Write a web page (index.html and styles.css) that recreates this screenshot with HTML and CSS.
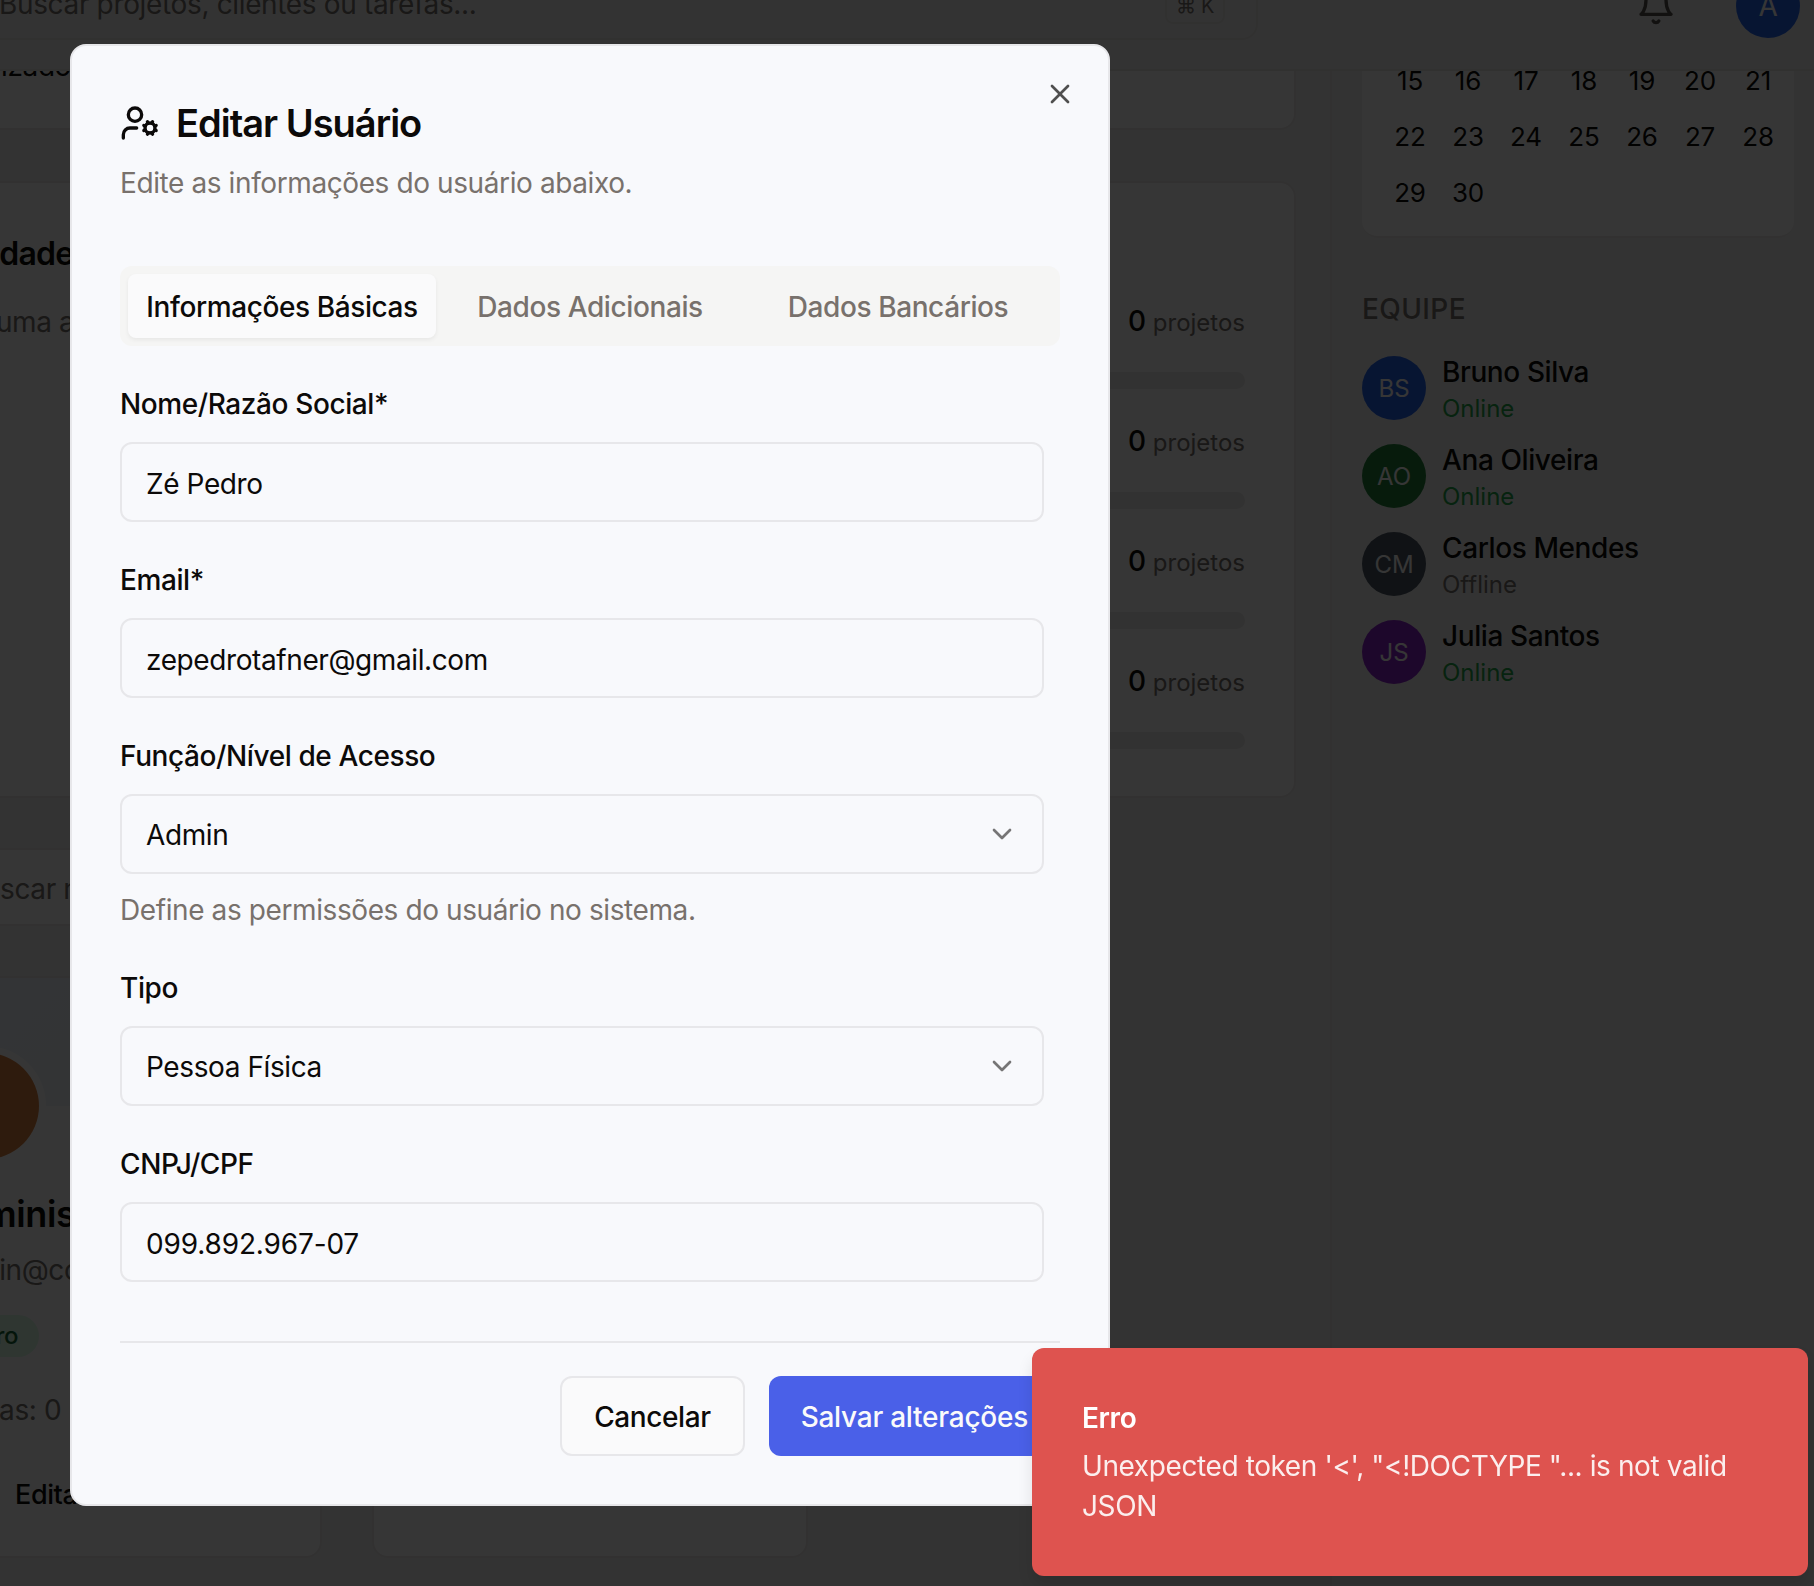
FILE: index.html
```html
<!DOCTYPE html>
<html lang="pt-BR">
<head>
<meta charset="utf-8">
<title>Editar Usuário</title>
<link rel="stylesheet" href="styles.css">
</head>
<body>
<div class="page">
  <header class="topbar">
    <div class="search">
      <span class="search-text">Buscar projetos, clientes ou tarefas...</span>
      <kbd class="kbd">⌘ K</kbd>
    </div>
    <div class="top-actions">
      <svg class="bell" viewBox="0 0 24 24" fill="none" stroke="currentColor" stroke-width="2" stroke-linecap="round" stroke-linejoin="round"><path d="M6 8a6 6 0 0 1 12 0c0 7 3 9 3 9H3s3-2 3-9"/><path d="M10.3 21a1.94 1.94 0 0 0 3.4 0"/></svg>
      <div class="top-avatar">A</div>
    </div>
  </header>
  <div class="workspace">
    <main class="main">
      <section class="card card-top"><p class="card-top-text">Realizado:</p></section>
      <section class="card card-activity">
        <div class="activity-head">
          <h2 class="activity-title">Atividades</h2>
          <p class="activity-sub">Nenhuma atividade</p>
        </div>
        <ul class="progress-list">
          <li class="progress-row"><p class="progress-label"><b>0</b> projetos</p><div class="bar"></div></li>
          <li class="progress-row"><p class="progress-label"><b>0</b> projetos</p><div class="bar"></div></li>
          <li class="progress-row"><p class="progress-label"><b>0</b> projetos</p><div class="bar"></div></li>
          <li class="progress-row"><p class="progress-label"><b>0</b> projetos</p><div class="bar"></div></li>
        </ul>
      </section>
      <div class="member-search">Buscar membros...</div>
      <div class="member-grid">
        <article class="card member-card">
          <div class="member-band"></div>
          <div class="member-avatar"></div>
          <h3 class="member-name">Administrador</h3>
          <p class="member-mail">admin@company.com</p>
          <span class="member-badge">Membro</span>
          <p class="member-tasks">Tarefas: 0</p>
          <p class="member-action">Editar</p>
        </article>
        <article class="card member-card member-card-b"></article>
      </div>
    </main>
    <aside class="aside">
      <div class="calendar">
        <span>15</span><span>16</span><span>17</span><span>18</span><span>19</span><span>20</span><span>21</span>
        <span>22</span><span>23</span><span>24</span><span>25</span><span>26</span><span>27</span><span>28</span>
        <span>29</span><span>30</span>
      </div>
      <h4 class="team-title">EQUIPE</h4>
      <ul class="team">
        <li class="team-row"><div class="team-avatar av-blue">BS</div><div><p class="team-name">Bruno Silva</p><p class="team-status on">Online</p></div></li>
        <li class="team-row"><div class="team-avatar av-green">AO</div><div><p class="team-name">Ana Oliveira</p><p class="team-status on">Online</p></div></li>
        <li class="team-row"><div class="team-avatar av-gray">CM</div><div><p class="team-name">Carlos Mendes</p><p class="team-status">Offline</p></div></li>
        <li class="team-row"><div class="team-avatar av-purple">JS</div><div><p class="team-name">Julia Santos</p><p class="team-status on">Online</p></div></li>
      </ul>
    </aside>
  </div>
</div>

<div class="overlay"></div>

<div class="modal" role="dialog">
  <button class="close" aria-label="Fechar">
    <svg viewBox="0 0 24 24" fill="none" stroke="currentColor" stroke-width="2" stroke-linecap="round" stroke-linejoin="round"><path d="M18 6 6 18"/><path d="m6 6 12 12"/></svg>
  </button>
  <div class="modal-title">
    <svg class="title-icon" viewBox="0 0 24 24" fill="none" stroke="currentColor" stroke-width="2" stroke-linecap="round" stroke-linejoin="round"><path d="M10 15H6a4 4 0 0 0-4 4v2"/><path d="m14.305 16.53.923-.382"/><path d="m15.228 13.852-.923-.383"/><path d="m16.852 12.228-.383-.923"/><path d="m16.852 17.772-.383.924"/><path d="m19.148 12.228.383-.923"/><path d="m19.53 18.696-.382-.924"/><path d="m20.772 13.852.924-.383"/><path d="m20.772 16.148.924.383"/><circle cx="18" cy="15" r="3"/><circle cx="9" cy="7" r="4"/></svg>
    <h1 class="title-text">Editar Usuário</h1>
  </div>
  <p class="modal-desc">Edite as informações do usuário abaixo.</p>
  <div class="tabs">
    <button class="tab active">Informações Básicas</button>
    <button class="tab">Dados Adicionais</button>
    <button class="tab">Dados Bancários</button>
  </div>
  <form class="form">
    <div class="field">
      <label class="label">Nome/Razão Social*</label>
      <input class="control" value="Zé Pedro">
    </div>
    <div class="field">
      <label class="label">Email*</label>
      <input class="control" value="zepedrotafner@gmail.com">
    </div>
    <div class="field">
      <label class="label">Função/Nível de Acesso</label>
      <button type="button" class="control select"><span>Admin</span>
        <svg class="chev" viewBox="0 0 24 24" fill="none" stroke="currentColor" stroke-width="2" stroke-linecap="round" stroke-linejoin="round"><path d="m6 9 6 6 6-6"/></svg>
      </button>
      <p class="help">Define as permissões do usuário no sistema.</p>
    </div>
    <div class="field">
      <label class="label">Tipo</label>
      <button type="button" class="control select"><span>Pessoa Física</span>
        <svg class="chev" viewBox="0 0 24 24" fill="none" stroke="currentColor" stroke-width="2" stroke-linecap="round" stroke-linejoin="round"><path d="m6 9 6 6 6-6"/></svg>
      </button>
    </div>
    <div class="field">
      <label class="label">CNPJ/CPF</label>
      <input class="control control-digits" value="099.892.967-07">
    </div>
  </form>
  <div class="modal-footer">
    <button class="btn btn-outline">Cancelar</button>
    <button class="btn btn-primary">Salvar alterações</button>
  </div>
</div>

<div class="toast" role="alert">
  <p class="toast-title">Erro</p>
  <p class="toast-msg">Unexpected token '&lt;', "&lt;!DOCTYPE "... is not valid JSON</p>
</div>
</body>
</html>
```

FILE: styles.css
```css
* { box-sizing: border-box; }
html, body { margin: 0; height: 100%; overflow: hidden; }
body { background: #f2f2f2; color: #0c0a09; font-family: Inter, "Noto Sans", sans-serif; font-size: 28px; letter-spacing: -0.4px; }
p, h1, h2, h3, h4, ul { margin: 0; padding: 0; }
ul { list-style: none; }
button, input { font: inherit; color: inherit; letter-spacing: inherit; }

/* Background app */
.page { height: 1586px; overflow: hidden; display: flex; flex-direction: column; }
.topbar { flex: none; height: 128px; margin-top: -57px; display: flex; align-items: center; justify-content: space-between; padding-right: 14px; border-bottom: 2px solid #e7e5e4; background: #f2f2f2; }
.search { width: 1308px; height: 68px; margin-left: -50px; padding: 0 31px 0 47px; display: flex; align-items: center; justify-content: space-between; border: 2px solid #e7e5e4; border-radius: 16px; color: #78716c; }
.search-text { margin-top: -5px; letter-spacing: -0.35px; }
.kbd { width: 60px; height: 36px; border: 2px solid #e7e5e4; border-radius: 8px; font: 20px Inter, sans-serif; display: flex; align-items: center; justify-content: center; }
.top-actions { display: flex; align-items: center; gap: 60px; }
.bell { width: 40px; height: 40px; color: #57534e; }
.top-avatar { width: 64px; height: 64px; border-radius: 50%; background: #2563eb; color: #fff; display: flex; align-items: center; justify-content: center; font-size: 28px; }

.workspace { flex: 1; display: flex; min-height: 0; overflow: hidden; }
.main { flex: 1; min-width: 0; margin-left: -130px; padding-right: 34px; overflow: hidden; }
.card { background: #fff; border: 2px solid #e9e8e7; border-radius: 16px; }
.card-top { height: 61px; margin-top: -2px; overflow: hidden; border-top: 0; border-radius: 0 0 16px 16px; padding-left: 74px; }
.card-top-text { margin-top: -23px; line-height: 40px; color: #0c0a09; }
.card-activity { margin-top: 51px; height: 617px; display: flex; justify-content: space-between; padding: 51px 49px 0 62px; }
.activity-title { font-size: 32px; line-height: 40px; font-weight: 600; letter-spacing: -0.8px; }
.activity-sub { margin: 28px 0 0 -7px; line-height: 40px; color: #78716c; white-space: nowrap; }
.progress-list { width: 117px; margin-top: 67px; }
.progress-row { height: 120px; }
.progress-label { line-height: 40px; color: #78716c; font-size: 24px; letter-spacing: 0; white-space: nowrap; }
.progress-label b { font-size: 28px; font-weight: 500; color: #0c0a09; }
.bar { margin-top: 29px; margin-left: -200px; height: 17px; border-radius: 9px; background: #ebeae9; }
.member-search { margin-top: 50px; width: 900px; height: 78px; padding: 19px 0 0 94px; line-height: 40px; color: #78716c; border: 2px solid #e9e8e7; border-radius: 12px; background: #fff; }
.member-grid { margin-top: 50px; display: grid; grid-template-columns: 452px 436px; gap: 50px; height: 582px; }
.member-card { position: relative; overflow: hidden; padding: 76px 0 0 53px; }
.member-band { height: 128px; margin: -76px 0 0 -53px; width: 448px; background: linear-gradient(135deg, #eff6ff, #f3f4f6); }
.member-avatar { width: 106px; height: 106px; margin: -53px 0 0 8px; border-radius: 50%; background: #d9803f; box-shadow: 0 0 0 7px #fff; }
.member-name { margin: 33px 0 0 12px; font-size: 36px; line-height: 44px; font-weight: 600; white-space: nowrap; }
.member-mail { margin: 14px 0 0 18px; line-height: 40px; color: #78716c; white-space: nowrap; }
.member-badge { display: block; margin-top: 25px; width: 114px; padding-right: 27px; text-align: right; height: 42px; line-height: 42px; border-radius: 21px; background: #dcfce7; color: #166534; font-size: 24px; font-weight: 500; white-space: nowrap; }
.member-tasks { margin: 33px 0 0 8px; line-height: 40px; color: #78716c; white-space: nowrap; }
.member-action { margin: 45px 0 0 90px; line-height: 40px; font-weight: 500; font-size: 27px; }

.aside { flex: none; width: 484px; border-left: 2px solid #e9e8e7; padding: 0 0 0 30px; overflow: hidden; }
.calendar { width: 432px; height: 186px; margin-top: -19px; padding: 0 0 0 19px; display: grid; grid-template-columns: repeat(7, 58px); grid-auto-rows: 56px; border: 2px solid #e9e8e7; border-width: 0 0 2px 0; border-radius: 16px; background: #fff; }
.calendar span { display: flex; align-items: center; justify-content: center; font-size: 26px; letter-spacing: -0.2px; }
.team-title { margin-top: 51px; font-size: 28px; line-height: 40px; font-weight: 500; letter-spacing: 0.4px; color: #78716c; }
.team { margin-top: 27px; display: flex; flex-direction: column; gap: 24px; }
.team-row { height: 64px; display: flex; gap: 16px; }
.team-avatar { flex: none; width: 64px; height: 64px; border-radius: 50%; color: #fff; display: flex; align-items: center; justify-content: center; font-size: 24px; letter-spacing: 0; }
.av-blue { background: #2563eb; }
.av-green { background: #22803a; }
.av-gray { background: #4b5563; }
.av-purple { background: #8b24c9; }
.team-name { line-height: 32px; font-weight: 500; }
.team-status { margin-top: 5px; line-height: 32px; font-size: 24px; letter-spacing: 0; color: #78716c; }
.team-status.on { color: #22a34a; }

/* Dialog layer */
.overlay { position: fixed; inset: 0; background: rgba(0,0,0,.79); }
.modal { position: fixed; left: 70px; top: 44px; width: 1040px; padding: 48px; background: #f8f9fc; border: 2px solid #e7e7ea; border-radius: 16px; }
.close { position: absolute; top: 32px; right: 32px; width: 32px; height: 32px; padding: 0; background: none; border: 0; color: #4f4f4f; }
.close svg { display: block; width: 32px; height: 32px; }
.modal-title { display: flex; align-items: center; gap: 16px; }
.title-icon { flex: none; width: 40px; height: 40px; }
.title-text { font-size: 38px; line-height: 58px; font-weight: 600; letter-spacing: -1px; }
.modal-desc { margin-top: 11px; line-height: 40px; color: #78716c; }
.tabs { margin-top: 63px; height: 80px; padding: 8px; display: grid; grid-template-columns: repeat(3, 1fr); background: #f5f5f4; border-radius: 12px; }
.tab { border: 0; background: none; padding: 2px 0 0; color: #78716c; font-weight: 500; border-radius: 8px; }
.tab.active { background: #fafafb; color: #0c0a09; box-shadow: 0 2px 4px rgba(0,0,0,.06); }
.form { margin-top: 44px; padding: 0 16px 59px 0; display: flex; flex-direction: column; gap: 44px; }
.label { display: block; line-height: 28px; font-weight: 500; margin-bottom: 24px; }
.control { display: block; width: 100%; height: 80px; padding: 3px 24px 0; background: transparent; border: 2px solid #e7e7ea; border-radius: 12px; outline: 0; text-align: left; }
.control-digits { letter-spacing: -0.15px; }
.select { display: flex; align-items: center; justify-content: space-between; padding-top: 2px; }
.chev { width: 32px; height: 32px; margin-top: -2px; opacity: .55; }
.help { margin-top: 16px; line-height: 40px; color: #78716c; }
.modal-footer { border-top: 2px solid #e7e7ea; padding-top: 33px; display: flex; justify-content: flex-end; gap: 24px; }
.btn { height: 80px; padding: 2px 32px 0; border-radius: 12px; font-weight: 500; }
.btn-outline { background: #fafafb; border: 2px solid #e7e7ea; }
.btn-primary { background: #4a60e8; color: #fafafa; border: 0; letter-spacing: -0.25px; }

.toast { position: fixed; left: 1032px; top: 1348px; width: 776px; height: 228px; padding: 50px; background: #de534f; color: #fff; border-radius: 12px; box-shadow: 0 10px 15px rgba(0,0,0,.1); }
.toast-title { line-height: 40px; font-weight: 600; }
.toast-msg { margin-top: 8px; line-height: 40px; opacity: .9; }
```
